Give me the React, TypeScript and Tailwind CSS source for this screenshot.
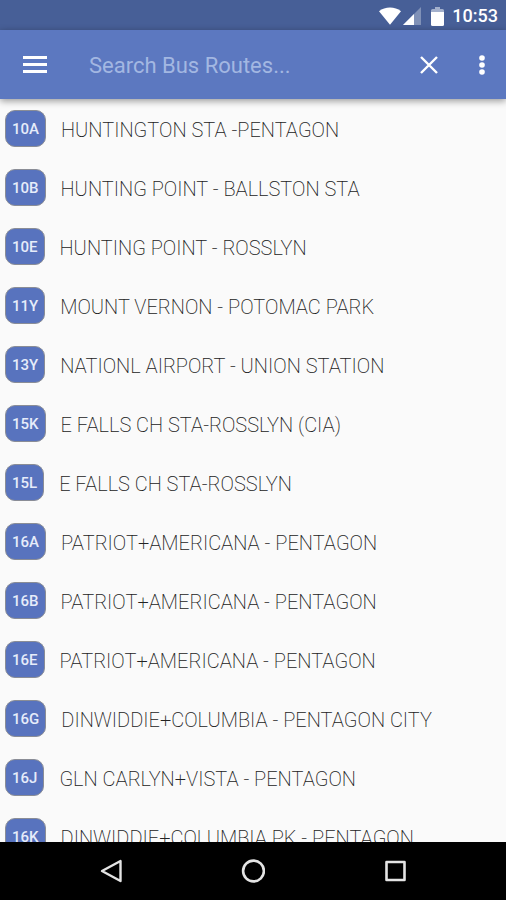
import { useState } from "react";

const routes = [
  { id: "10A", name: "HUNTINGTON STA -PENTAGON" },
  { id: "10B", name: "HUNTING POINT - BALLSTON STA" },
  { id: "10E", name: "HUNTING POINT - ROSSLYN" },
  { id: "11Y", name: "MOUNT VERNON - POTOMAC PARK" },
  { id: "13Y", name: "NATIONL AIRPORT - UNION STATION" },
  { id: "15K", name: "E FALLS CH STA-ROSSLYN (CIA)" },
  { id: "15L", name: "E FALLS CH STA-ROSSLYN" },
  { id: "16A", name: "PATRIOT+AMERICANA - PENTAGON" },
  { id: "16B", name: "PATRIOT+AMERICANA - PENTAGON" },
  { id: "16E", name: "PATRIOT+AMERICANA - PENTAGON" },
  { id: "16G", name: "DINWIDDIE+COLUMBIA - PENTAGON CITY" },
  { id: "16J", name: "GLN CARLYN+VISTA - PENTAGON" },
  { id: "16K", name: "DINWIDDIE+COLUMBIA PK - PENTAGON" },
];

function StatusBar() {
  return (
    <div className="flex h-[30px] shrink-0 items-center justify-end bg-[#475f97] pt-0.5 pr-2 text-white">
      <svg width="22" height="18" viewBox="0 0 22 18" fill="currentColor" aria-hidden="true">
        <path d="M0 4.2C3 1.6 7 0.4 11 0.4S19 1.6 22 4.2L11 17.8Z" />
      </svg>
      <svg className="ml-0.5" width="18" height="18" viewBox="0 0 18 18" aria-hidden="true">
        <path d="M0 18 18 0V18Z" fill="#8091b7" />
        <path d="M0 18 11 7V18Z" fill="currentColor" />
      </svg>
      <svg className="ml-2.5" width="13" height="19" viewBox="0 0 13 19" aria-hidden="true">
        <path d="M4 0H9V2H11.5Q13 2 13 3.5V6H0V3.5Q0 2 1.5 2H4Z" fill="#a3b0cc" />
        <path d="M0 5H13V17.5Q13 19 11.5 19H1.5Q0 19 0 17.5Z" fill="currentColor" />
      </svg>
      <span className="ml-2 text-lg leading-none font-medium">10:53</span>
    </div>
  );
}

function SearchBar() {
  const [query, setQuery] = useState("");

  return (
    <header className="z-10 flex h-[69px] shrink-0 items-center bg-[#5c78c0] text-white shadow-[0_2px_7px_rgba(0,0,0,0.4)]">
      <button type="button" aria-label="Open menu" className="flex h-12 w-[70px] items-center justify-center">
        <svg width="24" height="18" viewBox="0 0 24 18" fill="currentColor" aria-hidden="true">
          <path d="M0 0H24V3H0ZM0 7H24V10H0ZM0 14H24V17H0Z" />
        </svg>
      </button>
      <input
        type="text"
        aria-label="Search bus routes"
        placeholder="Search Bus Routes..."
        value={query}
        onChange={(e) => setQuery(e.target.value)}
        className="ml-[19px] min-w-0 flex-1 bg-transparent pt-0.5 text-[22px] outline-none placeholder:text-[#a3b7e2]"
      />
      <button
        type="button"
        aria-label="Clear search"
        onClick={() => setQuery("")}
        className="flex h-12 w-[58px] items-center justify-center"
      >
        <svg width="18" height="18" viewBox="0 0 18 18" stroke="currentColor" strokeWidth="2.4" aria-hidden="true">
          <path d="M1 1 17 17M17 1 1 17" />
        </svg>
      </button>
      <button type="button" aria-label="More options" className="flex h-12 w-12 items-center justify-center">
        <svg width="6" height="22" viewBox="0 0 6 22" fill="currentColor" aria-hidden="true">
          <circle cx="3" cy="4" r="2.8" />
          <circle cx="3" cy="11" r="2.8" />
          <circle cx="3" cy="18" r="2.8" />
        </svg>
      </button>
    </header>
  );
}

function RouteList() {
  return (
    <ul className="min-h-0 flex-1 overflow-y-auto [scrollbar-width:none]">
      {routes.map((route) => (
        <li key={route.id} className="flex h-[59px] items-center pl-[5px]">
          <span className="flex h-[37px] items-center rounded-[10px] border border-[#8a8d96] bg-[#5873be] px-1.5 pt-0.5 text-[15px] font-medium text-[#e6ecfa]">
            {route.id}
          </span>
          <span className="ml-[15px] pt-0.5 text-xl font-extralight whitespace-nowrap text-[#222]">{route.name}</span>
        </li>
      ))}
    </ul>
  );
}

function NavigationBar() {
  return (
    <nav aria-label="System" className="flex h-[58px] shrink-0 items-center justify-center bg-black text-[#e4e4e4]">
      <div className="flex w-full items-center justify-center gap-[94px]">
        <button type="button" aria-label="Back" className="flex size-12 items-center justify-center">
          <svg width="22" height="24" viewBox="0 0 22 24" fill="none" stroke="currentColor" strokeWidth="2.4" strokeLinejoin="round" aria-hidden="true">
            <path d="M20.5 2V22L2 12Z" />
          </svg>
        </button>
        <button type="button" aria-label="Home" className="flex size-12 items-center justify-center">
          <svg width="24" height="24" viewBox="0 0 24 24" fill="none" stroke="currentColor" strokeWidth="2.6" aria-hidden="true">
            <circle cx="12.5" cy="12" r="10.4" />
          </svg>
        </button>
        <button type="button" aria-label="Recent apps" className="flex size-12 items-center justify-center">
          <svg width="22" height="22" viewBox="0 0 22 22" fill="none" stroke="currentColor" strokeWidth="2.6" strokeLinejoin="round" aria-hidden="true">
            <path d="M2.5 2H20.5V20H2.5Z" />
          </svg>
        </button>
      </div>
    </nav>
  );
}

export default function App() {
  return (
    <div className="flex h-screen flex-col bg-[#fafafa] font-[Roboto,sans-serif]">
      <StatusBar />
      <SearchBar />
      <RouteList />
      <NavigationBar />
    </div>
  );
}
